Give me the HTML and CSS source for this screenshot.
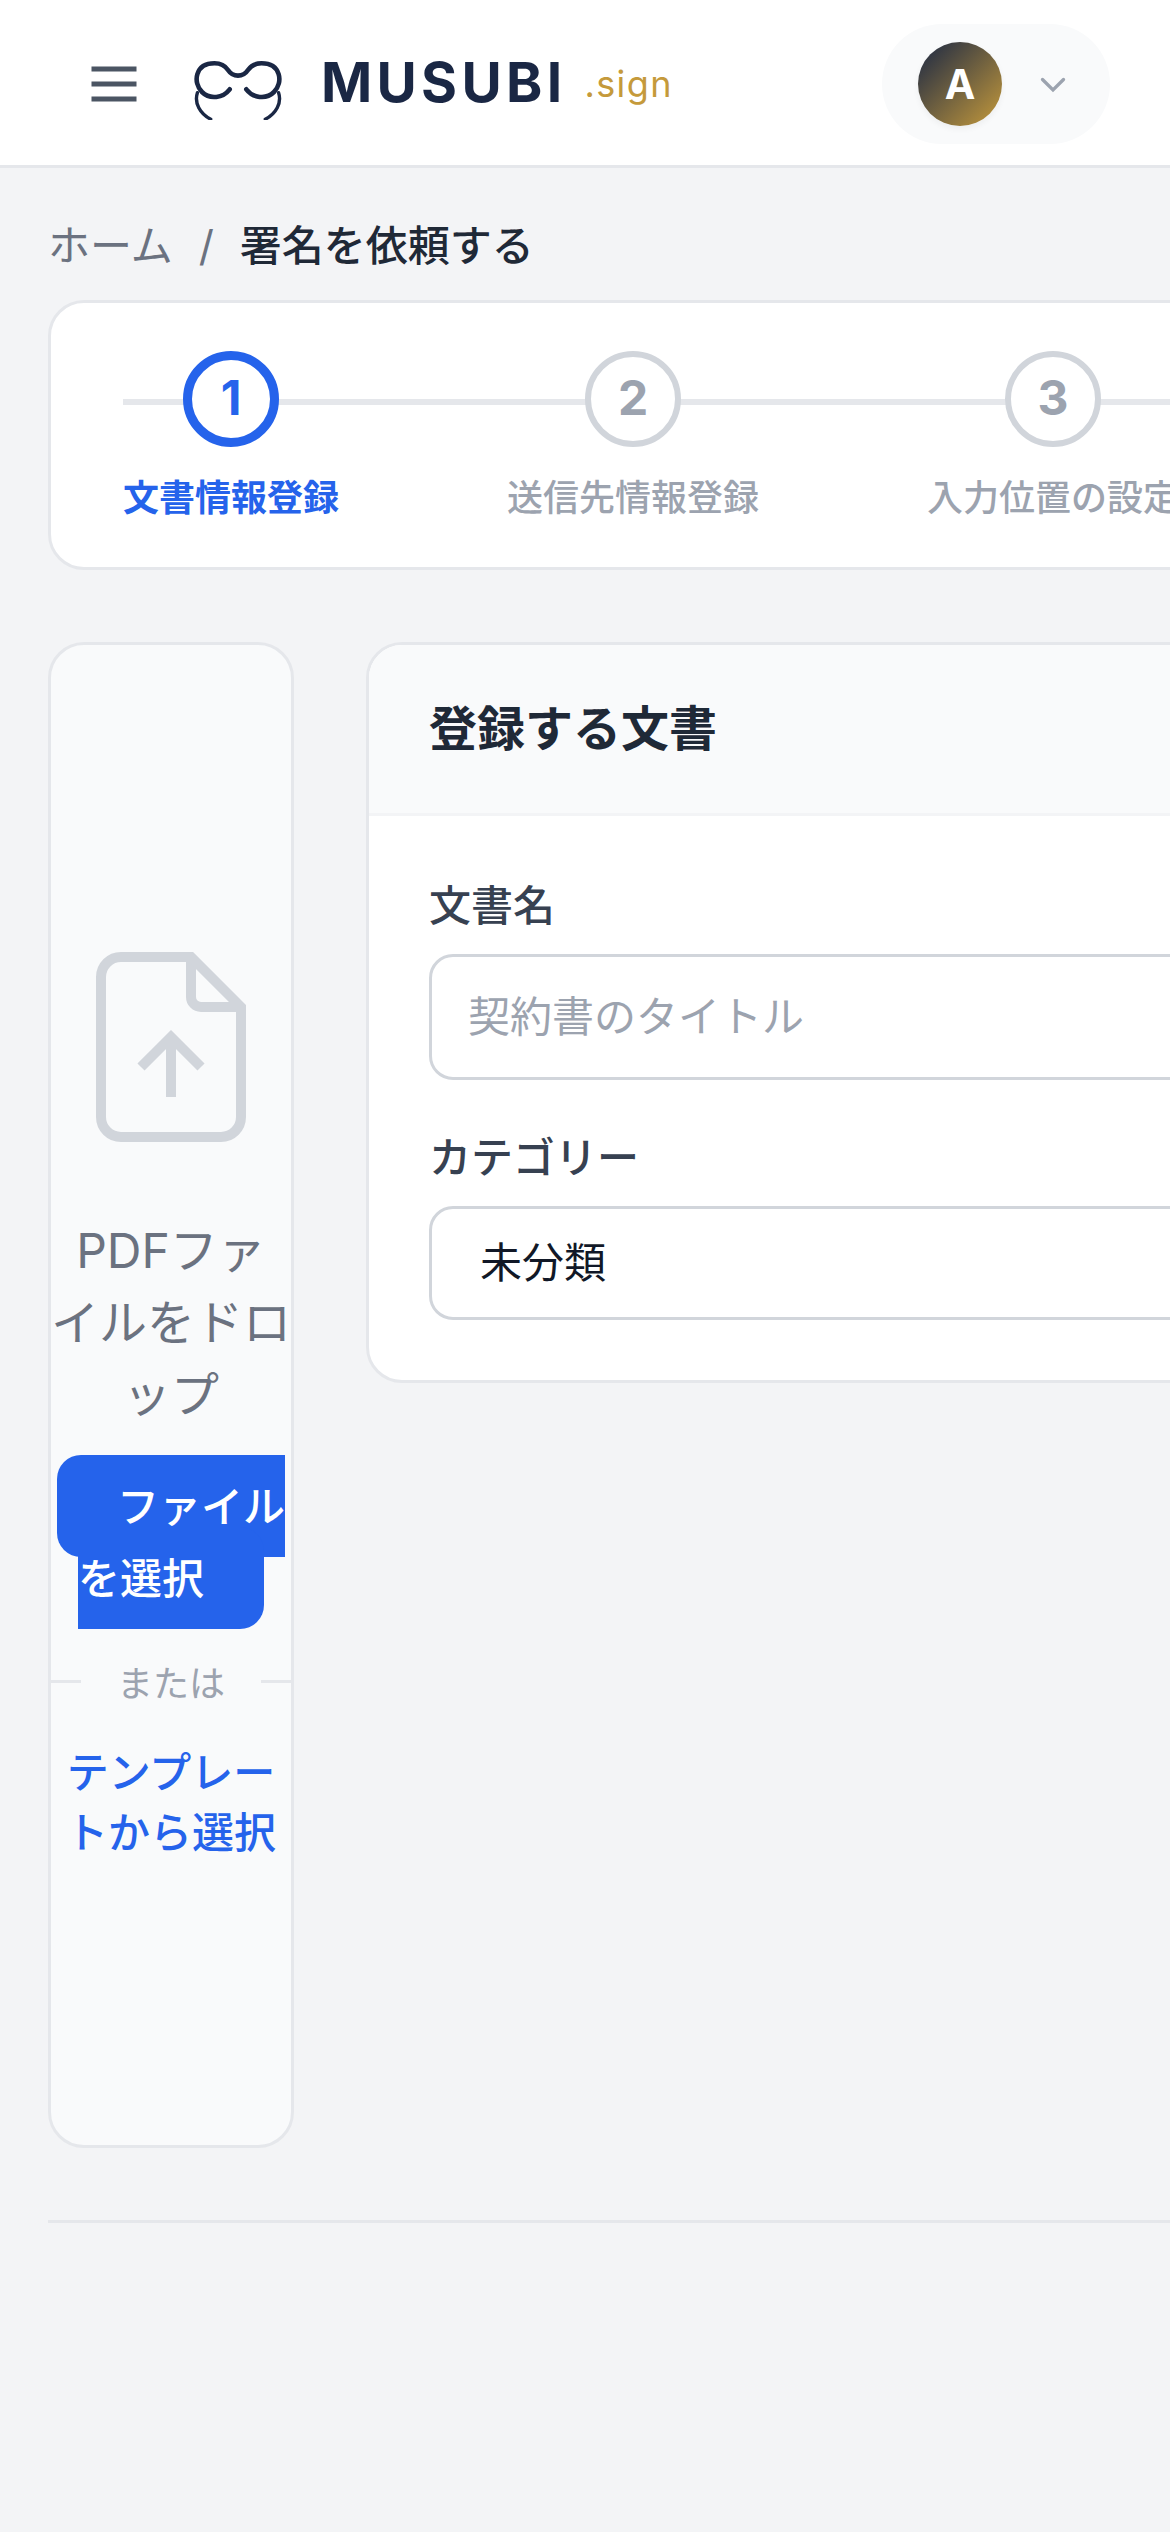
FILE: index.html
```html
<!DOCTYPE html>
<html lang="ja">
<head>
  <meta charset="UTF-8">
  <meta name="viewport" content="width=device-width, initial-scale=1.0">
  <title>署名を依頼する</title>
  <link rel="stylesheet" href="styles.css">
</head>
<body>
  <header class="header">
    <button class="menu-btn">
      <svg width="60" height="60" viewBox="0 0 24 24" fill="none" stroke="currentColor" stroke-width="2">
        <path d="M3 6h18M3 12h18M3 18h18"/>
      </svg>
    </button>
    <a class="logo" href="#">
      <svg class="logo-mark" width="96" height="72" viewBox="0 0 96 72" fill="none" stroke="currentColor" stroke-linecap="round">
        <path stroke-width="4.6" d="M39.700 41.300C33 50 20 52 12 44C2.500 34.500 5 15.300 24.500 15.300C30 15.300 35 17.500 38 22C41 26.500 44 27.600 48 27.600C52 27.600 55 26.500 58 22C61 17.500 66 15.300 71.500 15.300C91 15.300 93.500 34.500 84 44C76 52 63 50 56.300 41.300"/>
        <path stroke-width="3.4" d="M7.400 44.700C4 55 10 65.500 20.700 71.200M88.600 44.700C92 55 86 65.500 75.300 71.200"/>
      </svg>
      <span class="logo-text">MUSUBI</span>
      <span class="logo-sub">.sign</span>
    </a>
    <button class="user-menu">
      <span class="avatar">A</span>
      <svg width="36" height="36" viewBox="0 0 24 24" fill="none" stroke="currentColor" stroke-width="2.2" stroke-linecap="round">
        <path d="M19 9l-7 7-7-7"/>
      </svg>
    </button>
  </header>

  <main class="main">
    <nav class="breadcrumb">
      <a href="#">ホーム</a>
      <span class="sep">/</span>
      <span class="current">署名を依頼する</span>
    </nav>

    <div class="stepper">
      <div class="step active">
        <span class="step-circle">1</span>
        <span class="step-label">文書情報登録</span>
      </div>
      <div class="step">
        <span class="step-circle">2</span>
        <span class="step-label">送信先情報登録</span>
      </div>
      <div class="step">
        <span class="step-circle">3</span>
        <span class="step-label">入力位置の設定</span>
      </div>
    </div>

    <div class="content">
      <section class="dropzone">
        <svg width="240" height="240" viewBox="0 0 24 24" fill="none" stroke="currentColor" stroke-width="1">
          <path d="M14 3v4a1 1 0 0 0 1 1h4"/>
          <path d="M17 21H7a2 2 0 0 1-2-2V5a2 2 0 0 1 2-2h7l5 5v11a2 2 0 0 1-2 2z"/>
          <path d="M12 11v6M9 14l3-3 3 3"/>
        </svg>
        <p class="drop-text">PDFファ<br>イルをドロ<br>ップ</p>
        <div class="file-row"><label class="file-btn">ファイルを選択</label></div>
        <div class="divider"><span>または</span></div>
        <a class="template-link" href="#">テンプレートから選択</a>
      </section>

      <section class="card">
        <div class="card-header">
          <h2>登録する文書</h2>
        </div>
        <div class="card-body">
          <label class="field-label" for="title">文書名</label>
          <input class="field" id="title" type="text" placeholder="契約書のタイトル">
          <label class="field-label" for="category">カテゴリー</label>
          <select class="field field-select" id="category">
            <option>未分類</option>
          </select>
        </div>
      </section>
    </div>

    <div class="footer-line"></div>
  </main>
</body>
</html>
```

FILE: styles.css
```css
* {
  box-sizing: border-box;
}
html {
  overflow: hidden;
}
body {
  margin: 0;
  height: 2532px;
  overflow: hidden;
  font-family: Inter, "Noto Sans CJK JP", sans-serif;
  font-size: 42px;
  line-height: 60px;
  background-color: #f3f4f6;
  color: #111827;
}
a {
  color: inherit;
  text-decoration: none;
}
button {
  border: none;
  padding: 0;
  font-family: inherit;
  background: none;
}
svg {
  display: block;
  flex-shrink: 0;
}

/* Header */
.header {
  display: flex;
  align-items: center;
  height: 168px;
  padding: 0 60px 0 84px;
  background-color: #fff;
  box-shadow: inset 0 -3px 0 #e5e7eb;
}
.menu-btn {
  color: #4b5563;
}
.logo {
  display: flex;
  align-items: center;
  margin-left: 46px;
  color: #1a2744;
}
.logo-text {
  margin-left: 35px;
  padding-bottom: 4px;
  font-size: 55px;
  font-weight: 650;
  letter-spacing: 4.3px;
}
.logo-sub {
  margin-left: 18px;
  font-size: 36px;
  letter-spacing: 1.4px;
  color: #c59a3b;
}
.user-menu {
  display: flex;
  align-items: center;
  gap: 33px;
  height: 120px;
  margin-left: auto;
  padding: 0 39px 0 36px;
  border-radius: 60px;
  background-color: #f9fafb;
  color: #9ca3af;
}
.avatar {
  display: flex;
  align-items: center;
  justify-content: center;
  width: 84px;
  height: 84px;
  border-radius: 50%;
  background: linear-gradient(135deg, #1a2744, #c59a3b);
  box-shadow: 0 3px 6px rgba(0,0,0,0.05);
  color: #fff;
  font-size: 41px;
  font-weight: 700;
}

.main {
  width: 1500px;
  padding: 48px;
}
.breadcrumb {
  display: flex;
  gap: 24px;
  padding-bottom: 24px;
  color: #6b7280;
}
.breadcrumb .sep {
  width: 19px;
  text-align: center;
}
.breadcrumb .current {
  color: #1f2937;
  font-weight: 500;
}

/* Stepper */
.stepper {
  position: relative;
  display: flex;
  gap: 168px;
  height: 270px;
  padding: 48px 72px;
  border: 3px solid #e5e7eb;
  border-radius: 36px;
  background-color: #fff;
}
.stepper::before {
  content: "";
  position: absolute;
  top: 96px;
  left: 72px;
  right: 72px;
  height: 6px;
  background-color: #e5e7eb;
}
.step {
  position: relative;
  display: flex;
  flex-direction: column;
  align-items: center;
  gap: 24px;
  color: #9ca3af;
}
.step-circle {
  display: flex;
  align-items: center;
  justify-content: center;
  flex-shrink: 0;
  width: 96px;
  height: 96px;
  padding-bottom: 2px;
  border: 6px solid #d1d5db;
  border-radius: 50%;
  background-color: #fff;
  font-size: 48px;
  font-weight: 700;
}
.step-label {
  font-size: 36px;
  line-height: 54px;
  font-weight: 500;
  white-space: nowrap;
}
.step.active {
  color: #2563eb;
}
.step.active .step-circle {
  border: 9px solid #2563eb;
}
.step.active .step-label {
  font-weight: 700;
}

/* Upload area and form */
.content {
  display: flex;
  align-items: flex-start;
  gap: 72px;
  margin-top: 72px;
}
.dropzone {
  display: flex;
  flex-direction: column;
  justify-content: center;
  width: 246px;
  height: 1506px;
  flex-shrink: 0;
  border: 3px solid #e5e7eb;
  border-radius: 36px;
  background-color: #f9fafb;
  text-align: center;
  color: #d1d5db;
}
.drop-text {
  margin: 48px 0 39px;
  font-size: 48px;
  line-height: 72px;
  color: #6b7280;
}
.file-row {
  line-height: 72px;
}
.file-btn {
  padding: 25.5px 60px;
  border-radius: 24px;
  background-color: #2563eb;
  color: #fff;
  font-weight: 500;
}
.divider {
  display: flex;
  align-items: center;
  gap: 36px;
  margin: 42px 0 36px;
  font-size: 36px;
  line-height: 51px;
  color: #9ca3af;
}
.divider::before,
.divider::after {
  content: "";
  flex: 1;
  height: 3px;
  background-color: #e5e7eb;
}
.divider span {
  height: 51px;
  line-height: 57px;
  white-space: nowrap;
}
.template-link {
  color: #2563eb;
  font-weight: 500;
}
.card {
  flex: 1;
  border: 3px solid #e5e7eb;
  border-radius: 36px;
  background-color: #fff;
  overflow: hidden;
}
.card-header {
  padding: 48px 60px;
  border-bottom: 3px solid #f3f4f6;
  background-color: #f9fafb;
}
.card-header h2 {
  margin: 0;
  font-size: 48px;
  line-height: 72px;
  font-weight: 600;
  color: #1f2937;
}
.card-body {
  padding: 60px;
}
.field-label {
  display: block;
  margin-bottom: 18px;
  font-weight: 500;
  color: #374151;
}
.field {
  display: block;
  width: 100%;
  height: 126px;
  margin-bottom: 48px;
  padding: 0 36px 2px;
  border: 3px solid #d1d5db;
  border-radius: 24px;
  background-color: #fff;
  font-family: inherit;
  font-size: 42px;
  color: #111827;
}
.field::placeholder {
  color: #9ca3af;
  opacity: 1;
}
.field-select {
  height: 114px;
  margin-bottom: 0;
  padding: 0 48px 2px;
  appearance: none;
}
.footer-line {
  margin-top: 72px;
  border-top: 3px solid #e5e7eb;
}
```
